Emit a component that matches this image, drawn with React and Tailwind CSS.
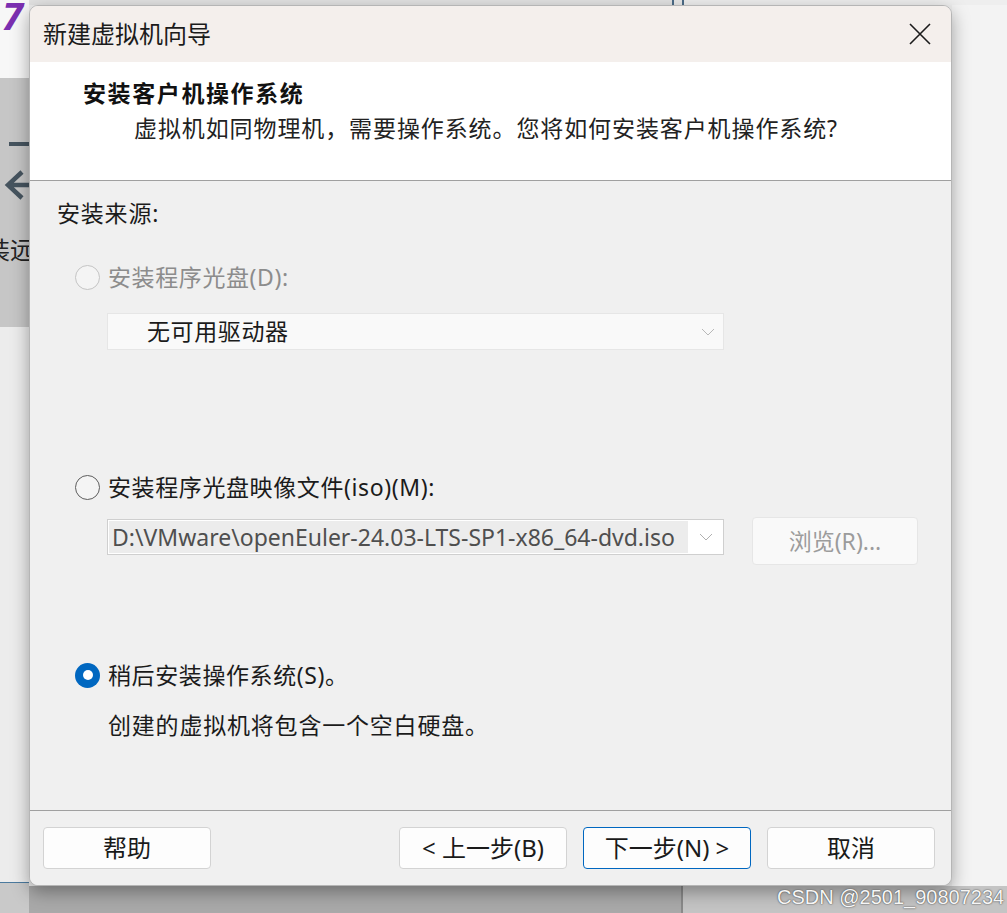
import React from 'react';

const cjk = 'font-["Segoe_UI","Noto_Sans","Noto_Sans_CJK_SC",sans-serif]';

const Radio = ({ checked = false, disabled = false }) => {
  if (checked) {
    return (
      <span className="flex h-[25px] w-[25px] shrink-0 items-center justify-center rounded-full bg-[#0067c0]">
        <span className="h-[10px] w-[10px] rounded-full bg-white" />
      </span>
    );
  }
  return (
    <span
      className={
        'h-[25px] w-[25px] shrink-0 rounded-full border-[1.5px] ' +
        (disabled ? 'border-[#c4c4c4] bg-[#f4f4f4]' : 'border-[#5d5d5d] bg-[#f4f4f4]')
      }
    />
  );
};

const Chevron = ({ color = '#a8a8a8' }) => (
  <svg width="14" height="8" viewBox="0 0 14 8" fill="none">
    <path d="M1 1 L7 7 L13 1" stroke={color} strokeWidth="1" />
  </svg>
);

const FooterButton = ({ children, primary = false }) => (
  <button
    type="button"
    className={
      'flex h-[42px] w-[168px] items-center justify-center rounded-[4px] bg-[#fdfdfd] text-[24px] text-[#1a1a1a] ' +
      (primary ? 'border border-[#0067c0]' : 'border border-[#d3d3d3]')
    }
  >
    {children}
  </button>
);

export default function App() {
  return (
    <div className={`relative flex h-[913px] w-[1007px] overflow-hidden bg-[#ededed] ${cjk}`}>
      {/* desktop behind the wizard */}
      <div className="flex w-[29px] shrink-0 flex-col overflow-hidden">
        <div className="flex h-[78px] shrink-0 items-start bg-[#f7f7f7]">
          <span className="-mt-[4px] ml-[2px] text-[38px] font-bold italic leading-none text-[#7b2fb0]">7</span>
        </div>
        <div className="flex h-[249px] shrink-0 flex-col items-start bg-[#c6c6c6] pt-[64px]">
          <span className="ml-[9px] h-[4px] w-[22px] bg-[#46545f]" />
          <svg width="29" height="34" viewBox="0 0 29 34" className="mt-[22px]" fill="none">
            <path d="M22 4 L8 17 L22 30 M8 17 L29 17" stroke="#46545f" strokeWidth="4.5" />
          </svg>
          <span className="-ml-[14px] mt-[36px] whitespace-nowrap text-[24px] leading-none text-[#222]">装远</span>
        </div>
        <div className="flex-1 bg-[#ececec]" />
        <div className="h-[1px] shrink-0 bg-[#4b7a9e]" />
        <div className="h-[30px] shrink-0 bg-[#c9c9c9]" />
      </div>
      <div className="flex flex-1 flex-col">
        <div className="flex h-[5px] shrink-0">
          <div className="w-[643px] bg-[#e2e2e2]" />
          <div className="w-[2px] bg-[#4c6c88]" />
          <div className="w-[8px] bg-[#e8e8e8]" />
          <div className="w-[2px] bg-[#4c6c88]" />
          <div className="flex-1 bg-[#eeeeee]" />
        </div>
        <div className="flex flex-1">
          <div className="w-[923px]" />
          <div className="flex-1 bg-[#f3f3f3]" />
        </div>
        <div className="flex h-[27px] shrink-0">
          <div className="w-[652px] bg-[#a9a9a9]" />
          <div className="w-[2px] bg-[#8a8a8a]" />
          <div className="flex-1 bg-[#c4c4c4]" />
        </div>
      </div>

      {/* wizard window */}
      <div className="absolute left-[29px] top-[5px] flex h-[881px] w-[923px] flex-col overflow-hidden rounded-[9px] border border-[#b5b5b5] bg-[#f0f0f0] shadow-[0_6px_18px_rgba(0,0,0,0.35)]">
        {/* title bar */}
        <div className="flex h-[56px] items-center justify-between bg-[#f4efec] pl-[13px] pr-[20px]">
          <span className="text-[24px] leading-none text-[#1b1b1b]">新建虚拟机向导</span>
          <svg width="22" height="22" viewBox="0 0 22 22" fill="none">
            <path d="M1 1 L21 21 M21 1 L1 21" stroke="#1b1b1b" strokeWidth="1.6" />
          </svg>
        </div>

        {/* header */}
        <div className="flex h-[118px] flex-col bg-white">
          <span className="ml-[53px] mt-[15px] text-[23px] font-bold leading-[32px] tracking-[1.6px] text-[#111]">
            安装客户机操作系统
          </span>
          <span className="ml-[104px] mt-[3px] text-[23px] leading-[32px] tracking-[0.9px] text-[#222]">
            虚拟机如同物理机，需要操作系统。您将如何安装客户机操作系统?
          </span>
        </div>
        <div className="h-[1px] bg-[#a0a0a0]" />

        {/* body */}
        <div className="flex flex-1 flex-col bg-[#f0f0f0] pl-[27px] text-[#1b1b1b]">
          <span className="mt-[16px] text-[23px] leading-[32px] tracking-[0.8px]">安装来源:</span>

          <div className="ml-[18px] mt-[32px] flex h-[32px] items-center gap-[8px]">
            <Radio disabled />
            <span className="text-[23px] leading-[32px] tracking-[0.6px] text-[#8c8c8c]">安装程序光盘(D):</span>
          </div>
          <div className="ml-[50px] mt-[20px] flex h-[37px] w-[617px] items-center justify-between border border-[#e6e6e6] bg-[#f9f9f9] pl-[39px] pr-[8px]">
            <span className="text-[23px] leading-none tracking-[0.6px]">无可用驱动器</span>
            <Chevron color="#b8b8b8" />
          </div>

          <div className="ml-[18px] mt-[121px] flex h-[32px] items-center gap-[8px]">
            <Radio />
            <span className="text-[23px] leading-[32px] tracking-[0.6px]">安装程序光盘映像文件(iso)(M):</span>
          </div>
          <div className="ml-[50px] mt-[14px] flex h-[48px] items-start gap-[28px]">
            <div className="mt-[2px] flex h-[36px] w-[617px] items-center border border-[#cfcfcf] bg-white pl-[1px] pr-[10px]">
              <span className="flex h-[32px] w-[579px] items-center bg-[#ececec] pl-[3px] text-[23px] leading-none text-[#4f4f4f]">
                D:\VMware\openEuler-24.03-LTS-SP1-x86_64-dvd.iso
              </span>
              <span className="ml-auto flex">
                <Chevron color="#b0b0b0" />
              </span>
            </div>
            <button
              type="button"
              className="flex h-[48px] w-[166px] items-center justify-center rounded-[4px] border border-[#e6e6e6] bg-[#f9f9f9] text-[23px] text-[#9c9c9c]"
            >
              浏览(R)...
            </button>
          </div>

          <div className="ml-[18px] mt-[94px] flex h-[32px] items-center gap-[8px]">
            <Radio checked />
            <span className="text-[23px] leading-[32px] tracking-[0.6px]">稍后安装操作系统(S)。</span>
          </div>
          <span className="ml-[51px] mt-[18px] text-[23px] leading-[32px] tracking-[0.8px]">
            创建的虚拟机将包含一个空白硬盘。
          </span>
        </div>
        <div className="h-[1px] bg-[#a0a0a0]" />

        {/* footer */}
        <div className="flex h-[74px] items-start bg-[#f0f0f0] pl-[13px] pr-[16px] pt-[16px]">
          <FooterButton>帮助</FooterButton>
          <div className="flex-1" />
          <div className="flex gap-[16px]">
            <FooterButton>&lt; 上一步(B)</FooterButton>
            <FooterButton primary>下一步(N) &gt;</FooterButton>
            <FooterButton>取消</FooterButton>
          </div>
        </div>
      </div>

      {/* watermark */}
      <span className="absolute left-[777px] top-[882px] font-['Liberation_Sans',sans-serif] text-[20px] text-[#f6f6f6] [text-shadow:0_0_1px_#444,0_0_2px_#666]">
        CSDN @2501_90807234
      </span>
    </div>
  );
}
